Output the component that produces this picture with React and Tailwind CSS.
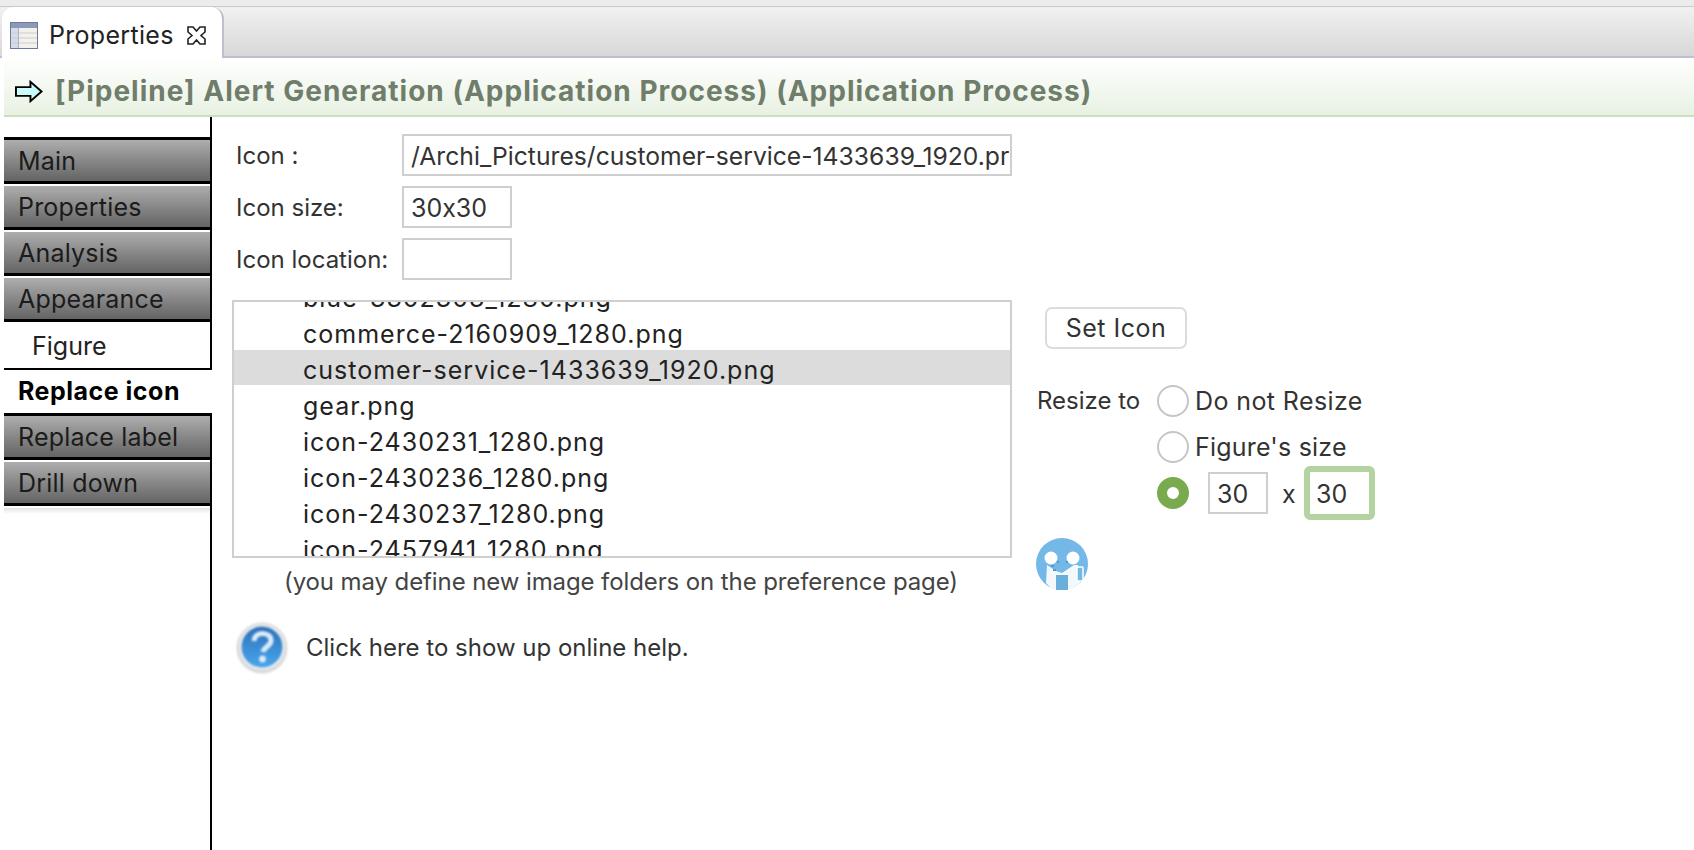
import { useState } from "react";

const font = "font-['Inter','Liberation_Sans',sans-serif]";

const tabs = [
    { name: "Main", kind: "gray" },
    { name: "Properties", kind: "gray" },
    { name: "Analysis", kind: "gray" },
    { name: "Appearance", kind: "gray" },
    { name: "Figure", kind: "sub" },
    { name: "Replace icon", kind: "active" },
    { name: "Replace label", kind: "gray" },
    { name: "Drill down", kind: "gray" },
];

const files = [
    "blue-3302303_1280.png",
    "commerce-2160909_1280.png",
    "customer-service-1433639_1920.png",
    "gear.png",
    "icon-2430231_1280.png",
    "icon-2430236_1280.png",
    "icon-2430237_1280.png",
    "icon-2457941_1280.png",
];

function TableIcon() {
    return (
        <svg width="28" height="27" viewBox="0 0 28 27" className="shrink-0">
            <rect x="0.5" y="0.5" width="27" height="26" fill="#f4f1ea" stroke="#6d7a9c" />
            <rect x="1" y="1" width="26" height="5" fill="#8c99b8" />
            <rect x="1" y="6" width="7" height="20" fill="#d5dbe8" />
            <path d="M1 11H27M1 16H27M1 21H27" stroke="#c9ccd6" />
            <path d="M8.5 6V26" stroke="#aab2c6" />
        </svg>
    );
}

function CloseIcon() {
    return (
        <svg width="21" height="21" viewBox="0 0 21 21" className="shrink-0 ml-[12px]">
            <path
                d="M2 2H7L10.5 6L14 2H19V7L15 10.5L19 14V19H14L10.5 15L7 19H2V14L6 10.5L2 7Z"
                fill="#fff"
                stroke="#222"
                strokeWidth="1.6"
            />
        </svg>
    );
}

function ArrowIcon() {
    return (
        <svg width="28" height="23" viewBox="0 0 29 23" className="shrink-0">
            <path d="M1 7H16V1.5L27.5 11.5L16 21.5V16H1Z" fill="#c9fbfb" stroke="#000" strokeWidth="2" />
        </svg>
    );
}

function HelpIcon() {
    return (
        <svg width="54" height="54" viewBox="0 0 54 54" className="shrink-0 blur-[0.8px]">
            <defs>
                <linearGradient id="helpFill" x1="0" y1="0" x2="0" y2="1">
                    <stop offset="0" stopColor="#2d6fb8" />
                    <stop offset="1" stopColor="#4aa8ee" />
                </linearGradient>
            </defs>
            <circle cx="27" cy="27" r="25.5" fill="#d9d9d9" />
            <circle cx="27" cy="26" r="21.5" fill="url(#helpFill)" stroke="#f2f2f2" strokeWidth="2" />
            <path
                d="M19 20C19.5 14 24 12.5 27.5 12.5C32.5 12.5 36 15.5 36 19.5C36 25 29 25.5 28 31"
                fill="none"
                stroke="#dcecf8"
                strokeWidth="5"
            />
            <circle cx="27.5" cy="38" r="3.4" fill="#dcecf8" />
        </svg>
    );
}

// preview of the selected picture
function AvatarIcon() {
    return (
        <svg width="52" height="52" viewBox="0 0 52 52" className="block">
            <circle cx="26" cy="26" r="26" fill="#73b8e6" />
            <circle cx="15" cy="20" r="6.5" fill="#fff" />
            <circle cx="37" cy="20" r="6.5" fill="#fff" />
            <path d="M11 27L20 33L26 35L32 31L38 27L42 27L44 45L36 51H16L10 45Z" fill="#f2f8fc" />
            <rect x="20" y="37" width="12" height="15" fill="#6aafdc" />
            <rect x="41" y="29" width="6" height="14" rx="1" fill="#73b8e6" stroke="#fff" strokeWidth="1.5" />
            <path d="M15 28H18M17 32H20M21 24H23M30 24H32" stroke="#4f9bcc" strokeWidth="2" />
        </svg>
    );
}

function SideTab({ name, kind }) {
    if (kind === "gray") {
        return (
            <div className="h-[46px] flex flex-col">
                <div className="h-[41px] flex items-center pt-[2px] pl-[14px] text-[#1b1b1b] tracking-[0.2px] bg-gradient-to-b from-[#aeaeae] to-[#646464] shrink-0">
                    {name}
                </div>
                <div className="h-[3px] bg-black shrink-0" />
            </div>
        );
    }
    if (kind === "sub") {
        return (
            <div className="h-[46px] flex items-center pl-[28px] text-[#222] border-b-2 border-black">
                {name}
            </div>
        );
    }
    return (
        <div className="h-[46px] flex items-center pl-[14px] font-bold tracking-[0.5px] text-black border-b-[3px] border-black mr-[-2px] bg-white relative">
            {name}
        </div>
    );
}

function Field({ label, value, wide }) {
    return (
        <div className="flex items-center h-[42px]">
            <span className="w-[170px] pl-[4px] pt-[2px] shrink-0 text-[#333] text-[24px]">{label}</span>
            <div
                className={`h-[42px] border-2 border-[#cfcfcf] flex items-center pl-[7px] pt-[3px] overflow-hidden whitespace-nowrap text-[#333] ${
                    wide ? "w-[610px] text-[24.7px]" : "w-[110px]"
                }`}
            >
                {value}
            </div>
        </div>
    );
}

function Radio({ checked }) {
    if (checked) {
        return <div className="w-[32px] h-[32px] rounded-full border-[10px] border-[#7aaa4e] bg-white shrink-0" />;
    }
    return <div className="w-[32px] h-[32px] rounded-full border-2 border-[#c6c6c6] bg-white shrink-0" />;
}

export default function App() {
    const [selected] = useState("customer-service-1433639_1920.png");

    return (
        <div className={`${font} [font-feature-settings:'calt'_0] text-[25px] leading-none h-screen w-screen overflow-hidden flex flex-col bg-white`}>
            {/* tab bar */}
            <div className="h-[7px] shrink-0 bg-[#ececec] border-b border-[#c9c9c9]" />
            <div className="h-[51px] shrink-0 flex bg-gradient-to-b from-[#f1f1f1] to-[#d8d8d8] border-b-2 border-[#bcc0d0]">
                <div className="w-[222px] ml-[2px] h-[51px] bg-white rounded-t-[12px] border-r-2 border-[#bcc0d0] flex items-center pl-[8px] pt-[5px] text-[#222]">
                    <TableIcon />
                    <span className="ml-[11px] tracking-[0.3px]">Properties</span>
                    <CloseIcon />
                </div>
            </div>

            {/* title */}
            <div className="h-[59px] shrink-0 flex items-center pl-[11px] pt-[9px] bg-gradient-to-b from-white to-[#e8f1e2] border-b-2 border-[#c9dfbf] ml-[4px]">
                <ArrowIcon />
                <span className="ml-[12px] font-bold text-[#6f7d6b] text-[28px] tracking-[1px] whitespace-nowrap">
                    [Pipeline] Alert Generation (Application Process) (Application Process)
                </span>
            </div>

            <div className="flex-1 flex min-h-0">
                {/* left tabs */}
                <div className="w-[208px] ml-[4px] shrink-0 border-r-2 border-black pt-[20px] flex flex-col">
                    <div className="h-[3px] bg-black shrink-0" />
                    {tabs.map((t) => (
                        <SideTab key={t.name} name={t.name} kind={t.kind} />
                    ))}
                    <div className="h-[6px] bg-gradient-to-b from-[#e4e4e4] to-white shrink-0" />
                </div>

                {/* form */}
                <div className="flex-1 flex pl-[20px] pt-[17px]">
                    <div className="w-[780px] shrink-0 flex flex-col">
                        <div className="flex flex-col gap-[10px]">
                            <Field label="Icon :" value="/Archi_Pictures/customer-service-1433639_1920.pr" wide />
                            <Field label="Icon size:" value="30x30" />
                            <Field label="Icon location:" value="" />
                        </div>

                        <div className="mt-[20px] h-[258px] border-2 border-[#cfcfcf] overflow-hidden">
                            <div className="-mt-[22px]">
                                {files.map((f) => (
                                    <div
                                        key={f}
                                        className={`flex items-center pl-[69px] text-[#222] tracking-[1px] ${
                                            f === selected
                                                ? "h-[35px] -mt-[2px] mb-[3px] pt-[5px] bg-[#dcdcdc]"
                                                : "h-[36px]"
                                        }`}
                                    >
                                        {f}
                                    </div>
                                ))}
                            </div>
                        </div>

                        <div className="mt-[12px] pl-[52px] text-[#444] text-[24px] whitespace-nowrap tracking-[-0.1px]">
                            (you may define new image folders on the preference page)
                        </div>

                        <div className="mt-[27px] flex items-center pl-[3px]">
                            <HelpIcon />
                            <span className="ml-[17px] text-[#333] text-[24px]">Click here to show up online help.</span>
                        </div>
                    </div>

                    {/* right column */}
                    <div className="ml-[25px] pt-[173px] flex flex-col items-start">
                        <button className="ml-[8px] w-[142px] h-[42px] rounded-[7px] border-2 border-[#dcdcdc] bg-white text-[#333] tracking-[0.5px] flex items-center justify-center">
                            Set Icon
                        </button>
                        <div className="mt-[36px] flex">
                            <span className="w-[120px] h-[32px] flex items-center text-[#333] text-[24px] shrink-0">Resize to</span>
                            <div className="flex flex-col gap-[14px]">
                                <label className="flex items-center gap-[6px] h-[32px] text-[#333] tracking-[0.4px]">
                                    <Radio />
                                    Do not Resize
                                </label>
                                <label className="flex items-center gap-[6px] h-[32px] text-[#333] tracking-[0.2px]">
                                    <Radio />
                                    Figure's size
                                </label>
                                <div className="flex items-center h-[32px] text-[#333]">
                                    <Radio checked />
                                    <div className="ml-[19px] w-[60px] h-[42px] border-2 border-[#cfcfcf] flex items-center pl-[7px] pt-[3px] shrink-0">
                                        30
                                    </div>
                                    <span className="ml-[14px] w-[22px] pt-[2px] shrink-0">x</span>
                                    <div className="w-[71px] h-[54px] border-[6px] border-[#b3d3a0] rounded-[6px] flex items-center pl-[6px] pt-[3px] shrink-0">
                                        30
                                    </div>
                                </div>
                            </div>
                        </div>
                        <div className="mt-[29px] ml-[-1px]">
                            <AvatarIcon />
                        </div>
                    </div>
                </div>
            </div>
        </div>
    );
}
